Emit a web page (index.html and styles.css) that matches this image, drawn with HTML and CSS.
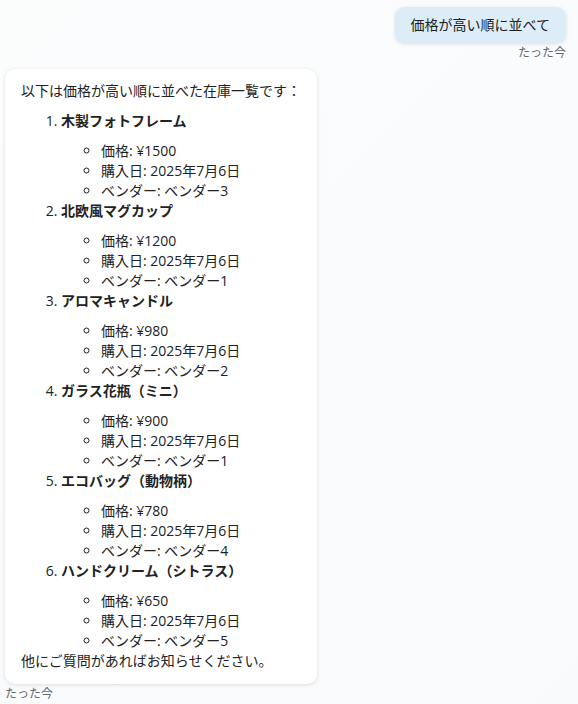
FILE: index.html
```html
<!DOCTYPE html>
<html lang="ja">

<head>
  <meta charset="UTF-8">
  <meta name="viewport" content="width=device-width, initial-scale=1.0">
  <title>在庫チャット</title>
  <link rel="stylesheet" href="styles.css">
</head>

<body>
  <div class="chat">
    <div class="message user">
      <div class="bubble">価格が高い順に並べて</div>
      <div class="time">たった今</div>
    </div>

    <div class="message bot">
      <div class="bubble">
        <p>以下は価格が高い順に並べた在庫一覧です：</p>
        <ol>
          <li>
            <strong>木製フォトフレーム</strong>
            <ul>
              <li>価格: ¥1500</li>
              <li>購入日: 2025年7月6日</li>
              <li>ベンダー: ベンダー3</li>
            </ul>
          </li>
          <li>
            <strong>北欧風マグカップ</strong>
            <ul>
              <li>価格: ¥1200</li>
              <li>購入日: 2025年7月6日</li>
              <li>ベンダー: ベンダー1</li>
            </ul>
          </li>
          <li>
            <strong>アロマキャンドル</strong>
            <ul>
              <li>価格: ¥980</li>
              <li>購入日: 2025年7月6日</li>
              <li>ベンダー: ベンダー2</li>
            </ul>
          </li>
          <li>
            <strong>ガラス花瓶（ミニ）</strong>
            <ul>
              <li>価格: ¥900</li>
              <li>購入日: 2025年7月6日</li>
              <li>ベンダー: ベンダー1</li>
            </ul>
          </li>
          <li>
            <strong>エコバッグ（動物柄）</strong>
            <ul>
              <li>価格: ¥780</li>
              <li>購入日: 2025年7月6日</li>
              <li>ベンダー: ベンダー4</li>
            </ul>
          </li>
          <li>
            <strong>ハンドクリーム（シトラス）</strong>
            <ul>
              <li>価格: ¥650</li>
              <li>購入日: 2025年7月6日</li>
              <li>ベンダー: ベンダー5</li>
            </ul>
          </li>
        </ol>
        <p>他にご質問があればお知らせください。</p>
      </div>
      <div class="time">たった今</div>
    </div>
  </div>
</body>

</html>
```

FILE: styles.css
```css
html,
body {
  height: 100%;
}

body {
  margin: 0;
  padding: 0;
  color: #222;
  font-family: "Open Sans", "Noto Sans CJK JP", sans-serif;
  font-size: 14px;
  line-height: 20px;
  background: linear-gradient(135deg, #fbfcfc 0%, #f9fafc 100%);
}

.chat {
  display: flex;
  flex-direction: column;
  padding: 7px 12px 0 5px;
}

.message {
  display: flex;
  flex-direction: column;
}

.message.user {
  align-items: flex-end;
  margin-bottom: 8px;
}

.message.bot {
  align-items: flex-start;
}

.bubble {
  border-radius: 10px;
  box-shadow: 0 1px 4px rgba(0, 0, 0, 0.12);
}

.user .bubble {
  background-color: #dcedf8;
  padding: 8px 16px;
}

.bot .bubble {
  background-color: #fff;
  padding: 12px 16px 13px;
}

.bubble p {
  margin: 0;
}

.bubble ol {
  margin: 10px 0 0;
  padding-left: 40px;
}

.bubble ol > li > strong {
  font-weight: bold;
}

.bubble ul {
  list-style-type: circle;
  margin: 10px 0 0;
  padding-left: 40px;
}

.time {
  font-size: 12px;
  color: #666;
  line-height: 16px;
  margin-top: 2px;
}
```
